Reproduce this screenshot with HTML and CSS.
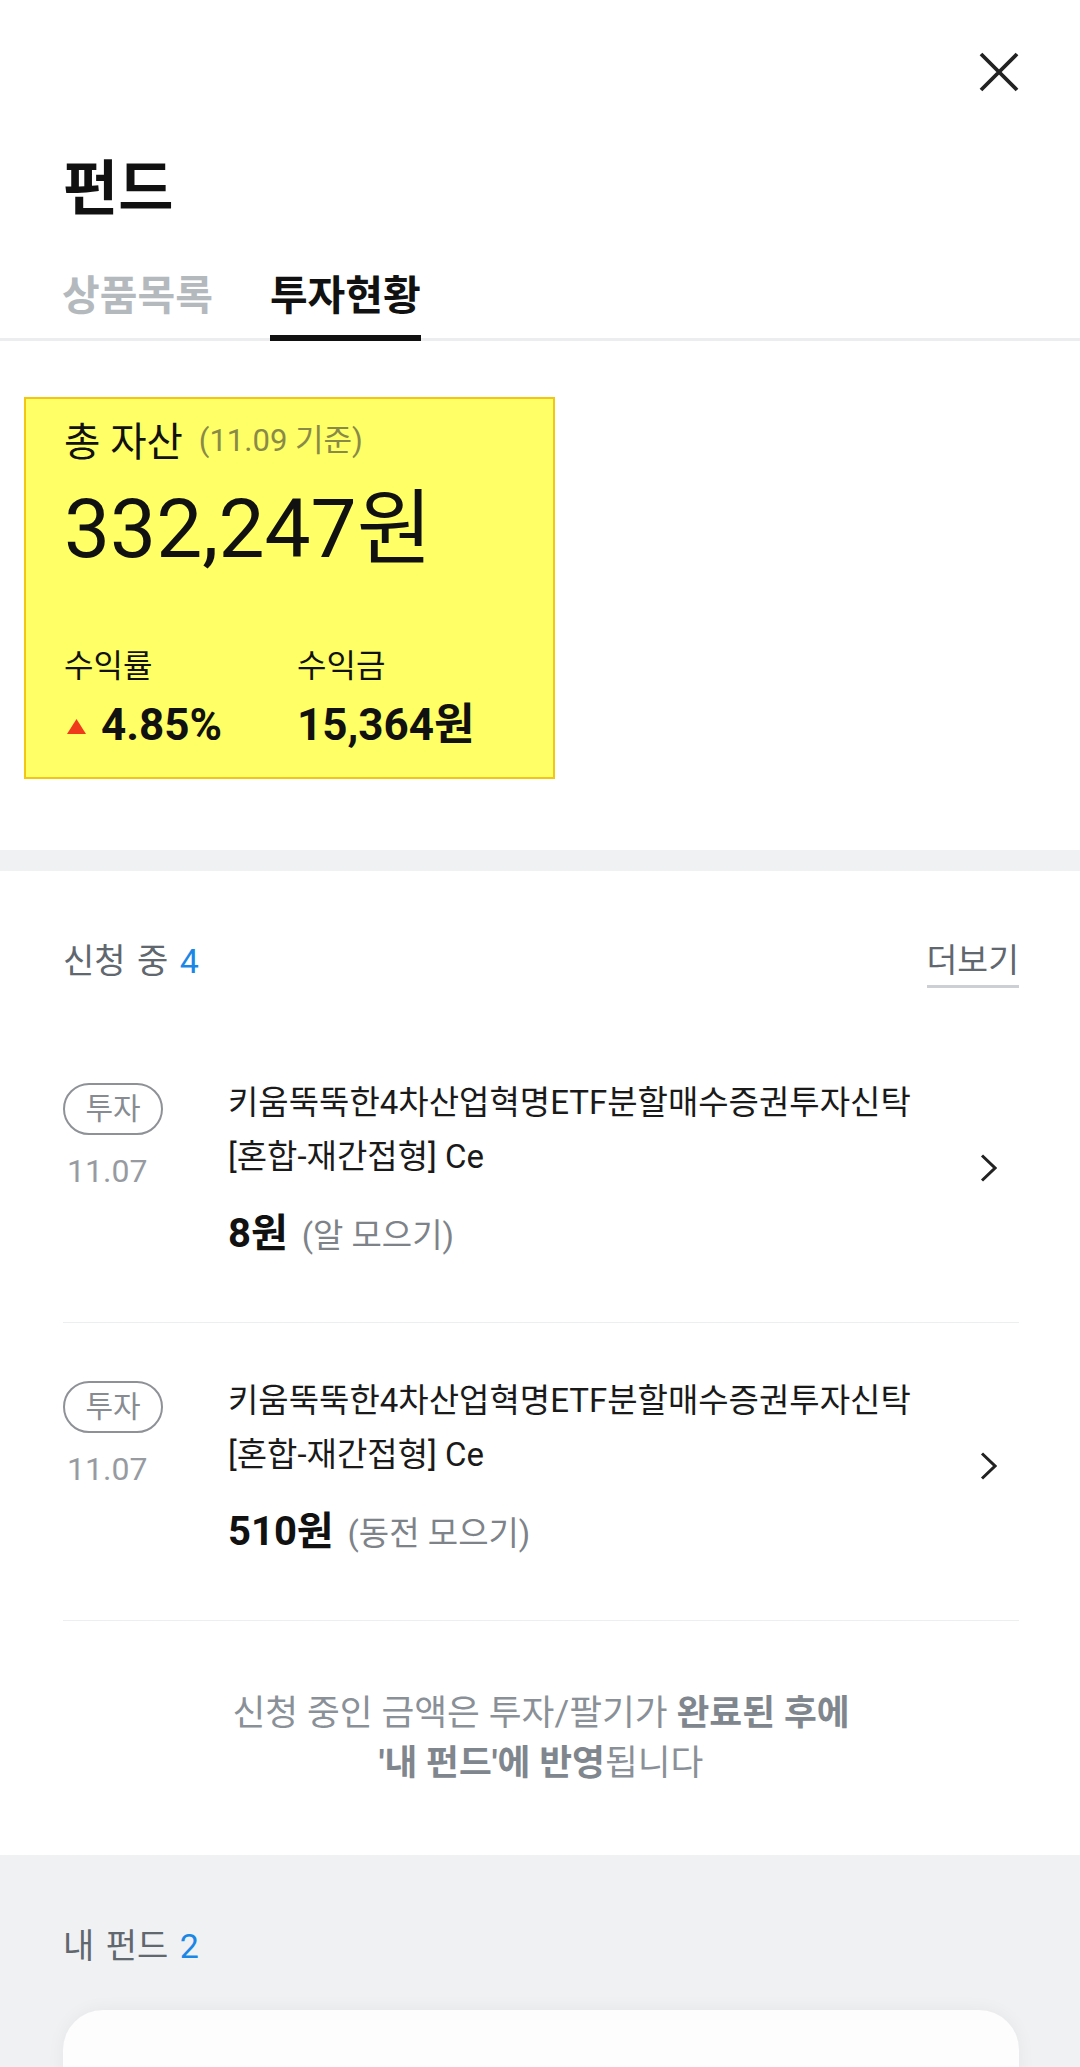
FILE: index.html
```html
<!DOCTYPE html>
<html lang="ko">
<head>
<meta charset="utf-8">
<title>펀드</title>
<link rel="stylesheet" href="styles.css">
</head>
<body>
<div class="page">
  <div class="topbar">
    <button class="close" aria-label="닫기">
      <svg width="40" height="40" viewBox="0 0 40 40"><path d="M2 2 L38 38 M38 2 L2 38" stroke="#222" stroke-width="3.8" fill="none"/></svg>
    </button>
  </div>
  <h1 class="title">펀드</h1>
  <nav class="tabs">
    <span class="tab">상품목록</span>
    <span class="tab active">투자현황</span>
  </nav>

  <section class="summary">
    <div class="asset-card">
      <div class="asset-head"><span class="asset-label">총 자산</span><span class="asset-date">(11.09 기준)</span></div>
      <div class="asset-total">332,247원</div>
      <div class="stats">
        <div class="stat-label">수익률</div>
        <div class="stat-label">수익금</div>
        <div class="stat-value"><svg class="up" width="19" height="15" viewBox="0 0 19 15"><path d="M9.5 0 L19 15 L0 15 Z" fill="#f03a1c"/></svg>4.85%</div>
        <div class="stat-value">15,364원</div>
      </div>
    </div>
  </section>

  <div class="band"></div>

  <section class="pending">
    <div class="sec-head">
      <span class="sec-title">신청 중 <span class="count">4</span></span>
      <span class="more">더보기</span>
    </div>
    <ul class="orders">
      <li class="order">
        <div class="order-side">
          <span class="badge">투자</span>
          <span class="order-date">11.07</span>
        </div>
        <div class="order-body">
          <div class="order-name">키움뚝뚝한4차산업혁명ETF분할매수증권투자신탁<br>[혼합-재간접형] Ce</div>
          <div class="order-amount"><b>8원</b> <span class="order-kind">(알 모으기)</span></div>
        </div>
        <svg class="chev" width="17" height="28" viewBox="0 0 17 28"><path d="M2 1.5 L15 14 L2 26.5" stroke="#222" stroke-width="3" fill="none"/></svg>
      </li>
      <li class="order">
        <div class="order-side">
          <span class="badge">투자</span>
          <span class="order-date">11.07</span>
        </div>
        <div class="order-body">
          <div class="order-name">키움뚝뚝한4차산업혁명ETF분할매수증권투자신탁<br>[혼합-재간접형] Ce</div>
          <div class="order-amount"><b>510원</b> <span class="order-kind">(동전 모으기)</span></div>
        </div>
        <svg class="chev" width="17" height="28" viewBox="0 0 17 28"><path d="M2 1.5 L15 14 L2 26.5" stroke="#222" stroke-width="3" fill="none"/></svg>
      </li>
    </ul>
    <p class="note">신청 중인 금액은 투자/팔기가 <b>완료된 후에</b><br><b>'내 펀드'에 반영</b>됩니다</p>
  </section>

  <section class="myfunds">
    <div class="sec-head">
      <span class="sec-title">내 펀드 <span class="count">2</span></span>
    </div>
    <div class="fund-card"></div>
  </section>
</div>
</body>
</html>
```

FILE: styles.css
```css
* { box-sizing: border-box; }

html, body {
  margin: 0;
  padding: 0;
  background: #ffffff;
}

body {
  font-family: Roboto, "Noto Sans CJK KR", "Noto Sans", sans-serif;
  color: #111;
}

.page {
  width: 1080px;
  height: 2067px;
  overflow: hidden;
}

/* top bar */
.topbar {
  height: 157px;
  display: flex;
  justify-content: flex-end;
  align-items: flex-start;
  padding: 52px 61px 0 0;
}

.close {
  border: 0;
  padding: 0;
  margin: 0;
  background: none;
  width: 40px;
  height: 40px;
  display: block;
}

.close svg { display: block; }

.title {
  margin: 0;
  padding-left: 63px;
  font-size: 60px;
  line-height: 66px;
  font-weight: 700;
  color: #111;
}

/* tabs */
.tabs {
  margin-top: 49px;
  display: flex;
  gap: 57px;
  padding-left: 62px;
  border-bottom: 3px solid #ebedef;
}

.tab {
  font-size: 41px;
  line-height: 48px;
  font-weight: 700;
  color: #b4b9be;
  padding-bottom: 15px;
  border-bottom: 6px solid transparent;
  margin-bottom: -3px;
}

.tab.active {
  color: #111;
  border-bottom-color: #111;
}

/* summary card */
.summary {
  padding: 56px 0 71px 24px;
}

.asset-card {
  width: 531px;
  height: 382px;
  background: #ffff66;
  border: 2px solid #f3c614;
  padding: 22px 0 0 38px;
}

.asset-head {
  display: flex;
  align-items: center;
  height: 44px;
}

.asset-label {
  font-size: 39.5px;
  line-height: 44px;
  color: #111;
}

.asset-date {
  font-size: 31px;
  line-height: 44px;
  color: #8a8a48;
  margin-left: 16px;
  padding-bottom: 4px;
}

.asset-total {
  margin-top: 16px;
  font-size: 82px;
  line-height: 96px;
  color: #111;
}

.stats {
  margin-top: 69px;
  display: grid;
  grid-template-columns: 233px auto;
  row-gap: 13px;
}

.stat-label {
  font-size: 32px;
  line-height: 40px;
  color: #111;
}

.stat-value {
  display: flex;
  align-items: center;
  font-size: 44px;
  line-height: 52px;
  font-weight: 700;
  color: #111;
}

.up {
  display: block;
  margin: 2px 15px 0 3px;
}

/* gray separator */
.band {
  height: 21px;
  background: #f0f1f3;
}

/* pending section */
.pending {
  padding: 68px 61px 0 63px;
}

.sec-head {
  display: flex;
  justify-content: space-between;
  align-items: flex-start;
}

.sec-title {
  font-size: 34px;
  line-height: 44px;
  word-spacing: 3px;
  color: #61676e;
}

.count {
  color: #1a87e6;
}

.more {
  font-size: 33.5px;
  line-height: 44px;
  color: #61676e;
  padding-bottom: 2px;
  border-bottom: 3px solid #ccd0d5;
}

.orders {
  list-style: none;
  margin: 37px 0 0;
  padding: 0;
}

.order {
  display: grid;
  grid-template-columns: 165px 1fr auto;
  padding: 51px 0 62px;
  border-bottom: 1px solid #eceef0;
}

.order-side {
  display: flex;
  flex-direction: column;
  align-items: flex-start;
}

.badge {
  margin-top: 7px;
  width: 100px;
  height: 52px;
  border: 2px solid #8e9297;
  border-radius: 26px;
  display: flex;
  align-items: center;
  justify-content: center;
  font-size: 30px;
  line-height: 1;
  color: #878c92;
}

.order-date {
  margin-top: 18px;
  padding-left: 4px;
  font-size: 32px;
  line-height: 36px;
  color: #979ba1;
}

.order-name {
  font-size: 33px;
  line-height: 54px;
  color: #1a1a1a;
}

.order-amount {
  margin-top: 26px;
  font-size: 40px;
  line-height: 48px;
  color: #111;
}

.order-amount b {
  font-weight: 700;
}

.order-kind {
  font-size: 33px;
  color: #7d8389;
  margin-left: 4px;
}

.chev {
  align-self: center;
  display: block;
  margin-right: 22px;
}

.note {
  margin: 0;
  padding: 67px 0 67px;
  text-align: center;
  font-size: 35.7px;
  line-height: 50px;
  color: #8a9097;
}

.note b {
  font-weight: 700;
  color: #80868d;
}

/* my funds */
.myfunds {
  height: 212px;
  background: #f0f1f3;
  padding: 69px 61px 0 63px;
  overflow: hidden;
}

.fund-card {
  margin-top: 42px;
  height: 160px;
  background: #fdfdfd;
  border-radius: 40px;
  box-shadow: 0 0 18px rgba(0, 0, 0, 0.05);
}
```
